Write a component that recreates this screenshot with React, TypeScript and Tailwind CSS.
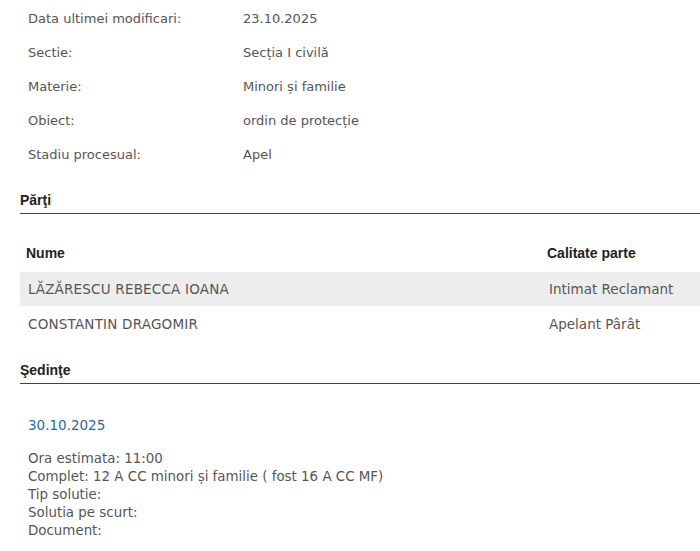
import React from 'react';

const details = [
  { label: 'Data ultimei modificari:', value: '23.10.2025' },
  { label: 'Sectie:', value: 'Secția I civilă' },
  { label: 'Materie:', value: 'Minori și familie' },
  { label: 'Obiect:', value: 'ordin de protecție' },
  { label: 'Stadiu procesual:', value: 'Apel' },
];

const parti = [
  { nume: 'LĂZĂRESCU REBECCA IOANA', calitate: 'Intimat Reclamant' },
  { nume: 'CONSTANTIN DRAGOMIR', calitate: 'Apelant Pârât' },
];

const sedinta = [
  'Ora estimata: 11:00',
  'Complet: 12 A CC minori și familie ( fost 16 A CC MF)',
  'Tip solutie:',
  'Solutia pe scurt:',
  'Document:',
];

const SectionTitle: React.FC<{ children: React.ReactNode }> = ({ children }) => (
  <h3 className="font-['Liberation_Sans',Arial,sans-serif] text-[14px] font-bold leading-[18px] text-[#222] pb-[4px] border-b border-[#444]">
    {children}
  </h3>
);

const App: React.FC = () => {
  return (
    <div className="w-[700px] h-[551px] overflow-hidden bg-white pl-[20px] pt-[2px] font-['DejaVu_Sans',Verdana,sans-serif] text-[13px] text-[#555]">
      {/* Detalii dosar */}
      <div className="flex flex-col">
        {details.map((d) => (
          <div key={d.label} className="flex h-[34px] items-center">
            <div className="w-[223px] pl-[8px]">{d.label}</div>
            <div>{d.value}</div>
          </div>
        ))}
      </div>

      {/* Parti */}
      <div className="mt-[19px]">
        <SectionTitle>Părţi</SectionTitle>
      </div>
      <div className="mt-[22px] flex flex-col gap-px">
        <div className="flex h-[35px] items-center font-['Liberation_Sans',Arial,sans-serif] text-[14px] font-bold text-[#222]">
          <div className="w-[521px] pl-[6px]">Nume</div>
          <div className="pl-[6px]">Calitate parte</div>
        </div>
        {parti.map((p, i) => (
          <div
            key={p.nume}
            className={`flex h-[34px] items-center text-[13.5px] ${i === 0 ? 'bg-[#ededed]' : ''}`}
          >
            <div className="w-[521px] pl-[8px] tracking-[0.2px]">{p.nume}</div>
            <div className="pl-[8px]">{p.calitate}</div>
          </div>
        ))}
      </div>

      {/* Sedinte */}
      <div className="mt-[20px]">
        <SectionTitle>Şedinţe</SectionTitle>
      </div>
      <div className="pl-[8px] pt-[32px]">
        <div className="text-[#2a6b9c] leading-[18px] text-[13.5px]">30.10.2025</div>
        <div className="mt-[16px] leading-[18px] text-[13.4px]">
          {sedinta.map((s) => (
            <div key={s}>{s}</div>
          ))}
        </div>
      </div>
    </div>
  );
};

export default App;
